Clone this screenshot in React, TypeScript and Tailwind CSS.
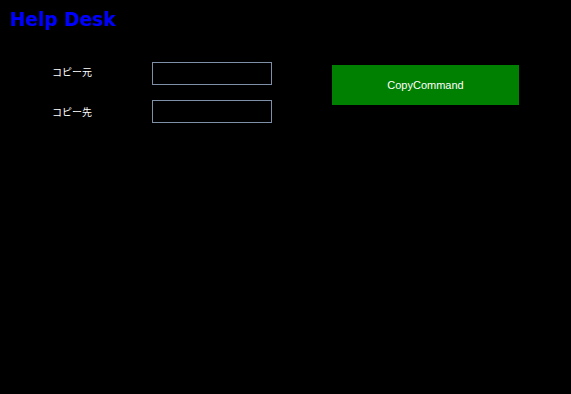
export default function App() {
  return (
    <main className="min-h-screen h-[394px] bg-black overflow-hidden">
      {/* Title */}
      <h1 className="ml-[10px] mt-[8px] text-[18.6px] leading-[24px] font-bold text-[#0000ff] [font-family:'DejaVu_Sans',sans-serif]">
        Help Desk
      </h1>

      {/* Form */}
      <div className="mt-[30px] flex items-start">
        <div className="ml-[52px] grid grid-cols-[100px_120px] gap-y-[15px] items-center">
          <label className="mb-[4px] text-[10px] text-white [font-family:'Noto_Sans_CJK_JP',sans-serif]">
            コピー元
          </label>
          <input className="h-[23px] w-[120px] border border-[#7d90a8] bg-black text-white text-[11px] px-1 outline-none" />
          <label className="text-[10px] text-white [font-family:'Noto_Sans_CJK_JP',sans-serif]">
            コピー先
          </label>
          <input className="h-[23px] w-[120px] border border-[#7d90a8] bg-black text-white text-[11px] px-1 outline-none" />
        </div>
        <button className="ml-[60px] mt-[3px] h-[40px] w-[187px] bg-[#008000] text-white text-[11px] [font-family:'Liberation_Sans',sans-serif]">
          CopyCommand
        </button>
      </div>
    </main>
  )
}
